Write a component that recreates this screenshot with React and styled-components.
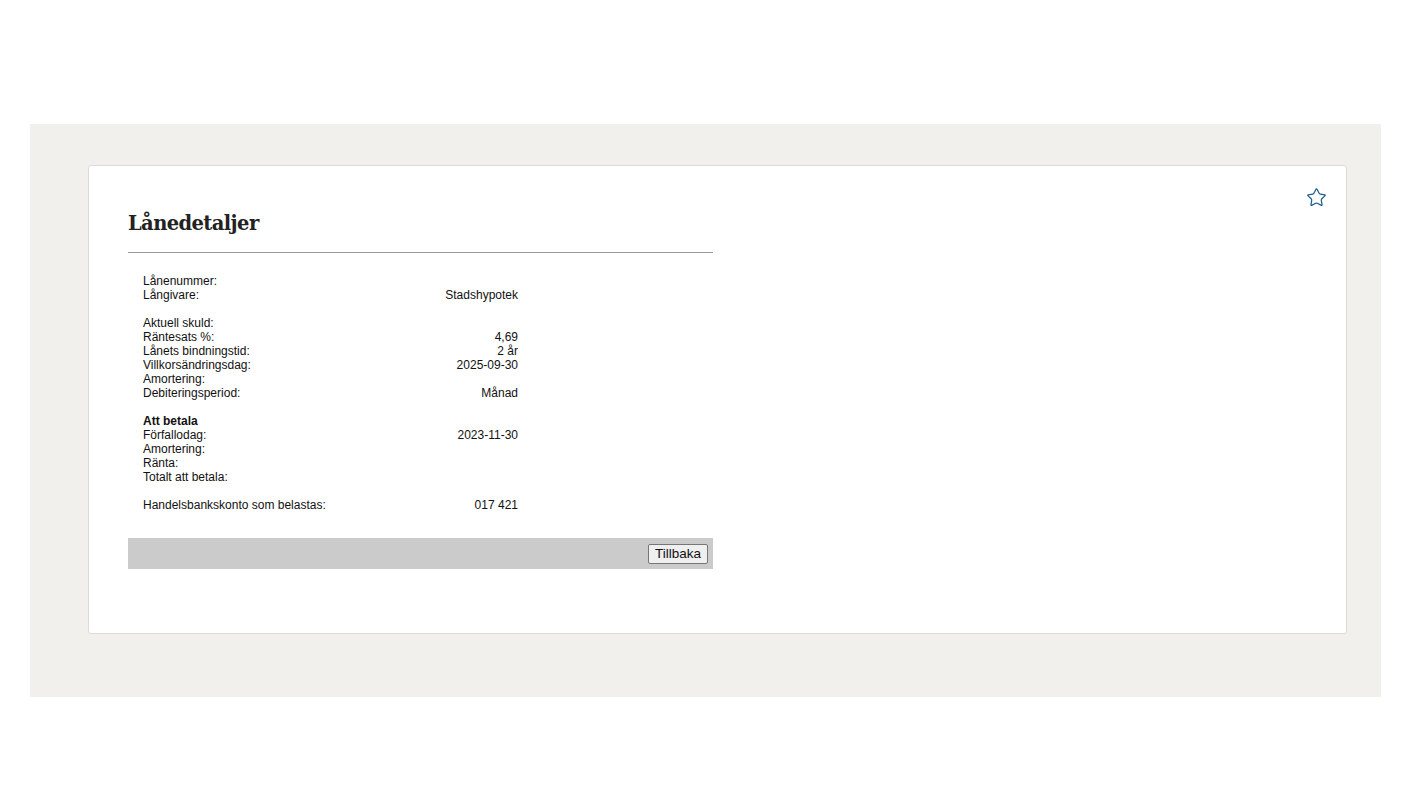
import React from 'react';
import styled, { createGlobalStyle } from 'styled-components';
import { Star } from 'lucide-react';

const GlobalStyle = createGlobalStyle`
  body {
    margin: 0;
    background: #fff;
    font-family: "Liberation Sans", Arial, sans-serif;
  }
`;

const Page = styled.div`
  padding-top: 124px;
  padding-left: 30px;
  padding-right: 42px;
`;

const Shell = styled.div`
  background: #f1f0ed;
  height: 573px;
  box-sizing: border-box;
  padding: 41px 34px 0 58px;
`;

const Card = styled.div`
  position: relative;
  background: #fff;
  border: 1px solid #dcdbd8;
  border-radius: 3px;
  height: 469px;
  box-sizing: border-box;
  padding: 40px 39px 0 39px;
`;

const FavButton = styled.button`
  position: absolute;
  top: 21px;
  right: 19px;
  border: none;
  background: none;
  padding: 0;
  color: #1f5d8c;
  cursor: pointer;
  display: flex;
`;

const Section = styled.div`
  width: 585px;
`;

const Title = styled.h1`
  margin: 0;
  font-family: "DejaVu Serif", Georgia, serif;
  font-weight: bold;
  font-size: 19.5px;
  line-height: 32px;
  color: #222;
  letter-spacing: -0.6px;
  padding-top: 2px;
  padding-bottom: 12px;
  border-bottom: 1px solid #999;
`;

const Details = styled.table`
  margin: 21px 0 0 15px;
  width: 375px;
  border-collapse: collapse;
  font-size: 12px;
  color: #111;

  td {
    padding: 0;
    height: 14px;
    line-height: 14px;
    white-space: nowrap;
  }
`;

const Value = styled.td`
  text-align: right;
`;

const Heading = styled.td`
  font-weight: bold;
`;

const Footer = styled.div`
  margin-top: 26px;
  height: 31px;
  background: #cbcbcb;
  display: flex;
  align-items: center;
  justify-content: flex-end;
  padding-right: 5px;
`;

const BackButton = styled.button`
  font-family: "Liberation Sans", Arial, sans-serif;
  font-size: 13.5px;
  color: #111;
  background: #efefef;
  border: 1px solid #767676;
  border-radius: 2px;
  height: 20px;
  padding: 0 6px;
  cursor: pointer;
`;

const rows = [
  ['Lånenummer:', ''],
  ['Långivare:', 'Stadshypotek'],
  null,
  ['Aktuell skuld:', ''],
  ['Räntesats %:', '4,69'],
  ['Lånets bindningstid:', '2 år'],
  ['Villkorsändringsdag:', '2025-09-30'],
  ['Amortering:', ''],
  ['Debiteringsperiod:', 'Månad'],
  null,
  ['#Att betala', ''],
  ['Förfallodag:', '2023-11-30'],
  ['Amortering:', ''],
  ['Ränta:', ''],
  ['Totalt att betala:', ''],
  null,
  ['Handelsbankskonto som belastas:', '017 421'],
];

export default function App() {
  return (
    <>
      <GlobalStyle />
      <Page>
        <Shell>
          <Card>
            <FavButton aria-label="Favorit">
              <Star size={21} strokeWidth={1.4} />
            </FavButton>
            <Section>
              <Title>Lånedetaljer</Title>
              <Details>
                <tbody>
                  {rows.map((row, i) => {
                    if (!row) return <tr key={i}><td colSpan={2}></td></tr>;
                    if (row[0].startsWith('#')) {
                      return <tr key={i}><Heading colSpan={2}>{row[0].slice(1)}</Heading></tr>;
                    }
                    return (
                      <tr key={i}>
                        <td>{row[0]}</td>
                        <Value>{row[1]}</Value>
                      </tr>
                    );
                  })}
                </tbody>
              </Details>
              <Footer>
                <BackButton>Tillbaka</BackButton>
              </Footer>
            </Section>
          </Card>
        </Shell>
      </Page>
    </>
  );
}
